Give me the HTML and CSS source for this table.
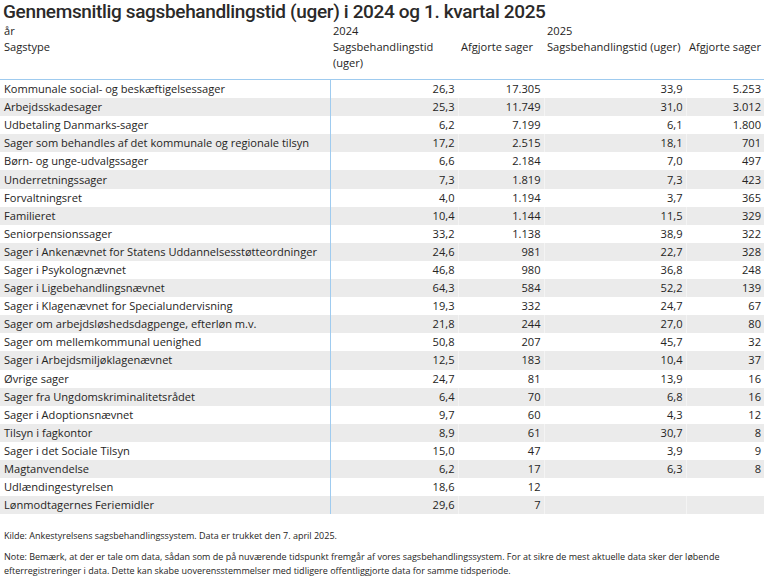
FILE: index.html
```html
<!DOCTYPE html>
<html lang="da">
<head>
<meta charset="utf-8">
<title>Gennemsnitlig sagsbehandlingstid</title>
<link rel="stylesheet" href="styles.css">
</head>
<body>
<div class="page">
  <h1 class="title">Gennemsnitlig sagsbehandlingstid (uger) i 2024 og 1. kvartal 2025</h1>
  <table class="grid">
    <colgroup>
      <col class="c1"><col class="c2"><col class="c3"><col class="c4"><col class="c5">
    </colgroup>
    <thead>
      <tr class="h1row">
        <th>år</th><th>2024</th><th></th><th>2025</th><th></th>
      </tr>
      <tr class="h2row">
        <th>Sagstype</th><th class="wrap">Sagsbehandlingstid (uger)</th><th>Afgjorte sager</th><th>Sagsbehandlingstid (uger)</th><th>Afgjorte sager</th>
      </tr>
    </thead>
    <tbody>
      <tr><td>Kommunale social- og beskæftigelsessager</td><td>26,3</td><td>17.305</td><td>33,9</td><td>5.253</td></tr>
      <tr><td>Arbejdsskadesager</td><td>25,3</td><td>11.749</td><td>31,0</td><td>3.012</td></tr>
      <tr><td>Udbetaling Danmarks-sager</td><td>6,2</td><td>7.199</td><td>6,1</td><td>1.800</td></tr>
      <tr><td>Sager som behandles af det kommunale og regionale tilsyn</td><td>17,2</td><td>2.515</td><td>18,1</td><td>701</td></tr>
      <tr><td>Børn- og unge-udvalgssager</td><td>6,6</td><td>2.184</td><td>7,0</td><td>497</td></tr>
      <tr><td>Underretningssager</td><td>7,3</td><td>1.819</td><td>7,3</td><td>423</td></tr>
      <tr><td>Forvaltningsret</td><td>4,0</td><td>1.194</td><td>3,7</td><td>365</td></tr>
      <tr><td>Familieret</td><td>10,4</td><td>1.144</td><td>11,5</td><td>329</td></tr>
      <tr><td>Seniorpensionssager</td><td>33,2</td><td>1.138</td><td>38,9</td><td>322</td></tr>
      <tr><td>Sager i Ankenævnet for Statens Uddannelsesstøtteordninger</td><td>24,6</td><td>981</td><td>22,7</td><td>328</td></tr>
      <tr><td>Sager i Psykolognævnet</td><td>46,8</td><td>980</td><td>36,8</td><td>248</td></tr>
      <tr><td>Sager i Ligebehandlingsnævnet</td><td>64,3</td><td>584</td><td>52,2</td><td>139</td></tr>
      <tr><td>Sager i Klagenævnet for Specialundervisning</td><td>19,3</td><td>332</td><td>24,7</td><td>67</td></tr>
      <tr><td>Sager om arbejdsløshedsdagpenge, efterløn m.v.</td><td>21,8</td><td>244</td><td>27,0</td><td>80</td></tr>
      <tr><td>Sager om mellemkommunal uenighed</td><td>50,8</td><td>207</td><td>45,7</td><td>32</td></tr>
      <tr><td>Sager i Arbejdsmiljøklagenævnet</td><td>12,5</td><td>183</td><td>10,4</td><td>37</td></tr>
      <tr><td>Øvrige sager</td><td>24,7</td><td>81</td><td>13,9</td><td>16</td></tr>
      <tr><td>Sager fra Ungdomskriminalitetsrådet</td><td>6,4</td><td>70</td><td>6,8</td><td>16</td></tr>
      <tr><td>Sager i Adoptionsnævnet</td><td>9,7</td><td>60</td><td>4,3</td><td>12</td></tr>
      <tr><td>Tilsyn i fagkontor</td><td>8,9</td><td>61</td><td>30,7</td><td>8</td></tr>
      <tr><td>Sager i det Sociale Tilsyn</td><td>15,0</td><td>47</td><td>3,9</td><td>9</td></tr>
      <tr><td>Magtanvendelse</td><td>6,2</td><td>17</td><td>6,3</td><td>8</td></tr>
      <tr><td>Udlændingestyrelsen</td><td>18,6</td><td>12</td><td></td><td></td></tr>
      <tr><td>Lønmodtagernes Feriemidler</td><td>29,6</td><td>7</td><td></td><td></td></tr>
    </tbody>
  </table>
  <p class="source">Kilde: Ankestyrelsens sagsbehandlingssystem. Data er trukket den 7. april 2025.</p>
  <p class="note">Note: Bemærk, at der er tale om data, sådan som de på nuværende tidspunkt fremgår af vores sagsbehandlingssystem. For at sikre de mest aktuelle data sker der løbende efterregistreringer i data. Dette kan skabe uoverensstemmelser med tidligere offentliggjorte data for samme tidsperiode.</p>
</div>
</body>
</html>
```

FILE: styles.css
```css
html, body {
  margin: 0;
  padding: 0;
  background: #ffffff;
}
.page {
  width: 768px;
  color: #252423;
  font-family: "Open Sans", "Noto Sans", sans-serif;
}
.title {
  margin: 0;
  padding: 0 0 0 3px;
  height: 23px;
  font-family: Roboto, "DejaVu Sans", sans-serif;
  font-weight: 500;
  font-size: 19px;
  letter-spacing: -0.35px;
  line-height: 23px;
  color: #2b2a29;
  white-space: nowrap;
}
.grid {
  width: 764px;
  border-collapse: collapse;
  table-layout: fixed;
  font-size: 11.1px;
}
.c1 { width: 330px; }
.c2 { width: 128px; }
.c3 { width: 86px; }
.c4 { width: 142px; }
.c5 { width: 78px; }
.grid th {
  font-weight: 400;
  text-align: left;
  vertical-align: top;
  padding: 0 3px;
  line-height: 16px;
  color: #252423;
  white-space: nowrap;
}
.grid th.wrap {
  white-space: normal;
}
.grid th:first-child {
  padding-left: 4px;
}
.h1row th {
  height: 16px;
}
.h2row th {
  padding-bottom: 8px;
  border-bottom: 1px solid #9fcbef;
}
.grid td {
  height: 18.1px;
  padding: 0 3px;
  line-height: 18px;
  text-align: right;
  white-space: nowrap;
  border-left: 1px solid rgba(255, 255, 255, 0.45);
}
.grid td:first-child {
  text-align: left;
  padding-left: 4px;
  border-left: none;
}
.grid td:nth-child(2) {
  border-left: 1px solid #9fcbef;
}
.grid tbody tr:nth-child(even) {
  background: #ebebeb;
}
.source, .note {
  margin: 0;
  padding-left: 4px;
  font-size: 9px;
  line-height: 14px;
  color: #252423;
}
.source {
  padding-top: 15px;
}
.note {
  padding-top: 7px;
  width: 750px;
}
```
